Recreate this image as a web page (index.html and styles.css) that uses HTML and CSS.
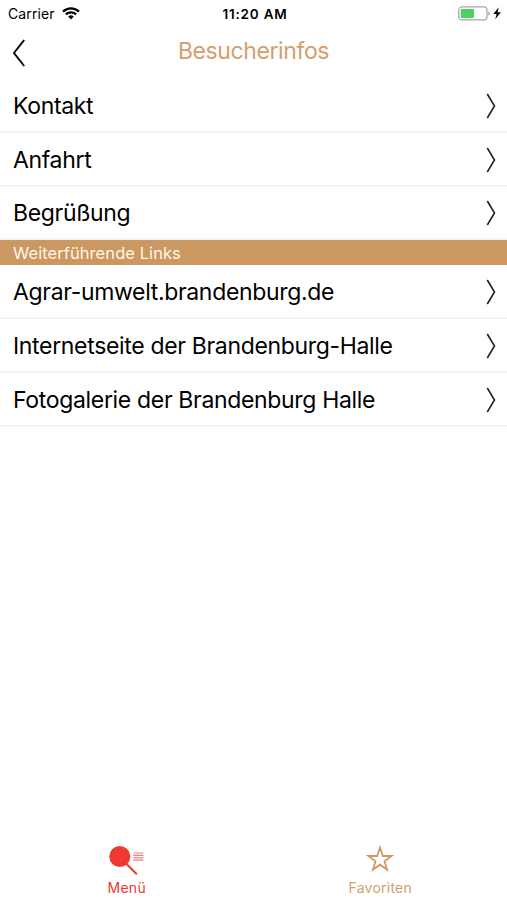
FILE: index.html
```html
<!DOCTYPE html>
<html lang="de">
<head>
  <meta charset="UTF-8">
  <title>Besucherinfos</title>
  <link rel="stylesheet" href="styles.css">
</head>
<body>
  <div class="status-bar">
    <div class="carrier">
      <span>Carrier</span>
      <svg width="18" height="13" viewBox="0 0 18 13">
        <path d="M1 4.6a11.5 11.5 0 0 1 16 0M3.8 7.4a7.6 7.6 0 0 1 10.4 0" fill="none" stroke="#000" stroke-width="2.2"/>
        <path d="M9 12.4L6.2 9.6a4 4 0 0 1 5.6 0z"/>
      </svg>
    </div>
    <span class="time">11:20 AM</span>
    <svg class="battery" width="44" height="15" viewBox="0 0 44 15">
      <rect x=".7" y=".9" width="28.3" height="13" rx="3.2" fill="#fff" stroke="#a8a8a8" stroke-width="1.3"/>
      <rect x="2.7" y="2.9" width="13.3" height="9" rx="1" fill="#4cd261"/>
      <path d="M30.3 5.2q1.7.6 1.7 2.2t-1.7 2.2z" fill="#a8a8a8"/>
      <path d="M40.8 1.2L35.3 8h3.3l-1.4 5.3L43 6.3h-3.4z"/>
    </svg>
  </div>

  <header class="nav-bar">
    <a class="back" href="#">
      <svg width="14" height="28" viewBox="0 0 14 28"><path d="M12.2 1L2 14l10.2 13" fill="none" stroke="#000" stroke-width="1.9"/></svg>
    </a>
    <h1>Besucherinfos</h1>
  </header>

  <main>
    <ul class="list">
      <li><a href="#"><span>Kontakt</span><svg class="chevron" viewBox="0 0 10 26"><path d="M1.3 1L8.5 13 1.3 25"/></svg></a></li>
      <li><a href="#"><span>Anfahrt</span><svg class="chevron" viewBox="0 0 10 26"><path d="M1.3 1L8.5 13 1.3 25"/></svg></a></li>
      <li><a href="#"><span>Begrüßung</span><svg class="chevron" viewBox="0 0 10 26"><path d="M1.3 1L8.5 13 1.3 25"/></svg></a></li>
    </ul>
    <h2>Weiterführende Links</h2>
    <ul class="list">
      <li><a href="#"><span>Agrar-umwelt.brandenburg.de</span><svg class="chevron" viewBox="0 0 10 26"><path d="M1.3 1L8.5 13 1.3 25"/></svg></a></li>
      <li><a href="#"><span>Internetseite der Brandenburg-Halle</span><svg class="chevron" viewBox="0 0 10 26"><path d="M1.3 1L8.5 13 1.3 25"/></svg></a></li>
      <li><a href="#"><span>Fotogalerie der Brandenburg Halle</span><svg class="chevron" viewBox="0 0 10 26"><path d="M1.3 1L8.5 13 1.3 25"/></svg></a></li>
    </ul>
  </main>

  <nav class="tab-bar">
    <a class="tab active" href="#">
      <svg width="36" height="30" viewBox="0 0 36 30">
        <circle cx="10.8" cy="11.5" r="10.5" fill="#ee3831"/>
        <path d="M17 18.5l10.8 10.8" stroke="#ee3831" stroke-width="2"/>
        <path d="M24.3 8h10M24.3 10.4h10M24.3 12.8h10M24.3 15.2h10" stroke="#f0817c" stroke-width="1.2"/>
      </svg>
      <span>Menü</span>
    </a>
    <a class="tab" href="#">
      <svg width="28" height="30" viewBox="0 0 28 30">
        <path d="M14 2.6l2.8 8.4h8.7l-7 5.3 2.6 8.5-7.1-5.1-7.1 5.1 2.6-8.5-7-5.3h8.7z" fill="none" stroke="#cf9a62" stroke-width="1.8"/>
      </svg>
      <span>Favoriten</span>
    </a>
  </nav>
</body>
</html>
```

FILE: styles.css
```css
* {
  box-sizing: border-box;
}
body {
  margin: 0;
  height: 100vh;
  display: flex;
  flex-direction: column;
  background: #fff;
  color: #000;
  font-family: Inter, "Liberation Sans", sans-serif;
}
a {
  color: inherit;
  text-decoration: none;
}
svg {
  display: block;
  flex: none;
}
.status-bar {
  height: 27px;
  padding: 0 5px 0 8px;
  display: grid;
  grid-template-columns: 1fr auto 1fr;
  align-items: center;
}
.carrier {
  display: flex;
  align-items: center;
  gap: 7px;
  font-size: 14px;
  letter-spacing: 0.1px;
}
.time {
  font-size: 13.5px;
  font-weight: 600;
  letter-spacing: 0.8px;
}
.battery {
  justify-self: end;
}
.nav-bar {
  height: 52px;
  display: grid;
  grid-template-columns: 40px 1fr 40px;
  align-items: center;
}
.back {
  padding-left: 12px;
}
h1 {
  margin: 0 0 4px;
  text-align: center;
  font-size: 23px;
  font-weight: 400;
  letter-spacing: -0.4px;
  color: #d3a06c;
}
.list {
  margin: 0;
  padding: 0;
  list-style: none;
}
.list li {
  height: 53.8px;
  border-bottom: 2px solid #f3f3f3;
}
.list a {
  height: 100%;
  padding: 2px 11px 0 13px;
  display: flex;
  align-items: center;
  justify-content: space-between;
  font-size: 23px;
  letter-spacing: -0.33px;
}
.chevron {
  width: 10px;
  height: 26px;
  fill: none;
  stroke: #222;
  stroke-width: 1.6;
}
h2 {
  height: 25px;
  margin: 0;
  padding-left: 13px;
  background: #cb9862;
  color: #fff5e8;
  font-size: 16.5px;
  font-weight: 400;
  line-height: 26px;
  letter-spacing: 0.07px;
}
.tab-bar {
  height: 55px;
  margin-top: auto;
  display: flex;
}
.tab {
  flex: 1;
  display: flex;
  flex-direction: column;
  align-items: center;
  color: #d3a06c;
  font-size: 14px;
  letter-spacing: 0.25px;
}
.tab span {
  margin-top: 4px;
  line-height: 18px;
}
.active {
  color: #ee3831;
}
```
